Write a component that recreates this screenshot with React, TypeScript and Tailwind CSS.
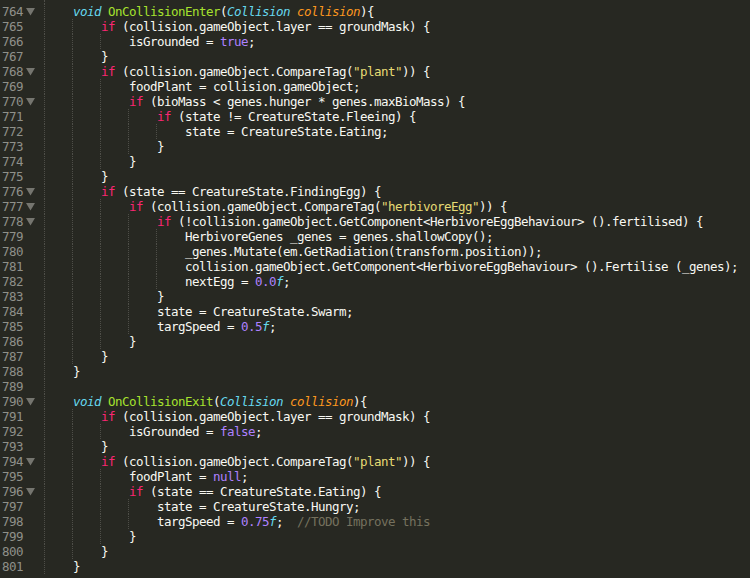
import React from "react";

type Tok = [string, string];
type Line = { n: number; lvl: number; fold?: boolean; toks: Tok[] };

const W = "text-[#f8f8f2]";
const K = "text-[#f92672]";
const S = "text-[#66d9ef] italic";
const G = "text-[#a6e22e]";
const O = "text-[#fd971f] italic";
const P = "text-[#ae81ff]";
const Y = "text-[#e6db74]";
const C = "text-[#75715e]";

const lines: Line[] = [
  { n: 764, lvl: 1, fold: true, toks: [["void", S], [" ", W], ["OnCollisionEnter", G], ["(", W], ["Collision", S], [" ", W], ["collision", O], ["){", W]] },
  { n: 765, lvl: 2, toks: [["if", K], [" (collision.gameObject.layer == groundMask) {", W]] },
  { n: 766, lvl: 3, toks: [["isGrounded = ", W], ["true", P], [";", W]] },
  { n: 767, lvl: 2, toks: [["}", W]] },
  { n: 768, lvl: 2, fold: true, toks: [["if", K], [" (collision.gameObject.CompareTag(", W], ['"plant"', Y], [")) {", W]] },
  { n: 769, lvl: 3, toks: [["foodPlant = collision.gameObject;", W]] },
  { n: 770, lvl: 3, fold: true, toks: [["if", K], [" (bioMass < genes.hunger * genes.maxBioMass) {", W]] },
  { n: 771, lvl: 4, toks: [["if", K], [" (state != CreatureState.Fleeing) {", W]] },
  { n: 772, lvl: 5, toks: [["state = CreatureState.Eating;", W]] },
  { n: 773, lvl: 4, toks: [["}", W]] },
  { n: 774, lvl: 3, toks: [["}", W]] },
  { n: 775, lvl: 2, toks: [["}", W]] },
  { n: 776, lvl: 2, fold: true, toks: [["if", K], [" (state == CreatureState.FindingEgg) {", W]] },
  { n: 777, lvl: 3, fold: true, toks: [["if", K], [" (collision.gameObject.CompareTag(", W], ['"herbivoreEgg"', Y], [")) {", W]] },
  { n: 778, lvl: 4, fold: true, toks: [["if", K], [" (!collision.gameObject.GetComponent<HerbivoreEggBehaviour> ().fertilised) {", W]] },
  { n: 779, lvl: 5, toks: [["HerbivoreGenes _genes = genes.shallowCopy();", W]] },
  { n: 780, lvl: 5, toks: [["_genes.Mutate(em.GetRadiation(transform.position));", W]] },
  { n: 781, lvl: 5, toks: [["collision.gameObject.GetComponent<HerbivoreEggBehaviour> ().Fertilise (_genes);", W]] },
  { n: 782, lvl: 5, toks: [["nextEgg = ", W], ["0.0", P], ["f", S], [";", W]] },
  { n: 783, lvl: 4, toks: [["}", W]] },
  { n: 784, lvl: 4, toks: [["state = CreatureState.Swarm;", W]] },
  { n: 785, lvl: 4, toks: [["targSpeed = ", W], ["0.5", P], ["f", S], [";", W]] },
  { n: 786, lvl: 3, toks: [["}", W]] },
  { n: 787, lvl: 2, toks: [["}", W]] },
  { n: 788, lvl: 1, toks: [["}", W]] },
  { n: 789, lvl: 1, toks: [] },
  { n: 790, lvl: 1, fold: true, toks: [["void", S], [" ", W], ["OnCollisionExit", G], ["(", W], ["Collision", S], [" ", W], ["collision", O], ["){", W]] },
  { n: 791, lvl: 2, toks: [["if", K], [" (collision.gameObject.layer == groundMask) {", W]] },
  { n: 792, lvl: 3, toks: [["isGrounded = ", W], ["false", P], [";", W]] },
  { n: 793, lvl: 2, toks: [["}", W]] },
  { n: 794, lvl: 2, fold: true, toks: [["if", K], [" (collision.gameObject.CompareTag(", W], ['"plant"', Y], [")) {", W]] },
  { n: 795, lvl: 3, toks: [["foodPlant = ", W], ["null", P], [";", W]] },
  { n: 796, lvl: 3, fold: true, toks: [["if", K], [" (state == CreatureState.Eating) {", W]] },
  { n: 797, lvl: 4, toks: [["state = CreatureState.Hungry;", W]] },
  { n: 798, lvl: 4, toks: [["targSpeed = ", W], ["0.75", P], ["f", S], [";  ", W], ["//TODO Improve this", C]] },
  { n: 799, lvl: 3, toks: [["}", W]] },
  { n: 800, lvl: 2, toks: [["}", W]] },
  { n: 801, lvl: 1, toks: [["}", W]] },
];

function Guides({ count }: { count: number }) {
  return (
    <>
      {Array.from({ length: count }).map((_, i) => (
        <span key={i} className="w-[28px] h-full shrink-0 border-l border-dotted border-[#4e4e48]" />
      ))}
    </>
  );
}

export default function App() {
  return (
    <div
      className="w-[750px] h-[578px] overflow-hidden bg-[#272822] flex flex-col text-[12.5px] leading-[15px] tracking-[-0.525px]"
      style={{ fontFamily: '"DejaVu Sans Mono", "Liberation Mono", monospace' }}
    >
      <div className="flex h-[4px] shrink-0">
        <div className="w-[44px] shrink-0" />
        <Guides count={1} />
      </div>
      {lines.map((l) => (
        <div key={l.n} className="flex h-[15px] shrink-0">
          <div className="w-[44px] shrink-0 flex">
            <span className="pl-[2px] w-[26px] text-[#8f908a] whitespace-pre">{l.n}</span>
            {l.fold && (
              <svg width="9" height="8" viewBox="0 0 9 8" className="mt-[4px]">
                <polygon points="0,0 9,0 4.5,7.5" fill="#75756f" />
              </svg>
            )}
          </div>
          <Guides count={l.lvl} />
          <span className="pl-[1px] whitespace-pre">
            {l.toks.map((t, i) => (
              <span key={i} className={t[1]}>
                {t[0]}
              </span>
            ))}
          </span>
        </div>
      ))}
    </div>
  );
}
